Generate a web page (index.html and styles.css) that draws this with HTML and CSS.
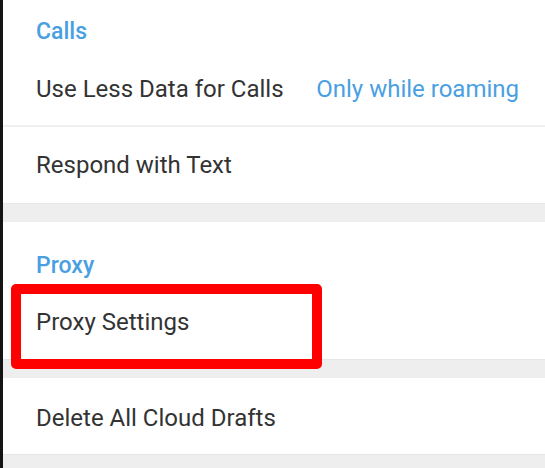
FILE: index.html
```html
<!DOCTYPE html>
<html>
  <head>
    <meta name="viewport" content="width=device-width,initial-scale=1.0">
    <title>Settings</title>
    <link rel="stylesheet" href="styles.css">
  </head>
  <body>
    <div id="settings">
      <div class="section">
        <div class="section-header first">Calls</div>
        <div class="row divided">
          <span class="label">Use Less Data for Calls</span>
          <span class="value">Only while roaming</span>
        </div>
        <div class="row">
          <span class="label">Respond with Text</span>
        </div>
      </div>
      <div class="shadow-gap"></div>
      <div class="section">
        <div class="section-header">Proxy</div>
        <div class="row highlighted">
          <span class="label">Proxy Settings</span>
          <div class="highlight-box"></div>
        </div>
      </div>
      <div class="shadow-gap"></div>
      <div class="section">
        <div class="row lowered">
          <span class="label">Delete All Cloud Drafts</span>
        </div>
      </div>
      <div class="shadow-gap tail"></div>
    </div>
  </body>
</html>
```

FILE: styles.css
```css
body {
  margin: 0;
  background: #fff;
  font-family: Roboto, "Noto Sans", sans-serif;
  height: 468px;
  overflow: hidden;
}
#settings {
  border-left: 3px solid #141414;
  height: 100%;
  display: flex;
  flex-direction: column;
}
.section {
  background: #fff;
}
.section-header {
  height: 62px;
  box-sizing: border-box;
  padding: 30px 0 0 33px;
  font-size: 23px;
  font-weight: 500;
  color: #4a9fe2;
  line-height: 28px;
}
.section-header.first {
  height: 50px;
  padding-top: 18px;
}
.row {
  height: 76px;
  box-sizing: border-box;
  display: flex;
  align-items: center;
  padding: 0 26px 0 33px;
  font-size: 24px;
  color: #333;
}
.row.divided {
  height: 77px;
  border-bottom: 2px solid #f0f0f0;
  padding-top: 3px;
}
.row.lowered {
  padding-top: 3px;
}
.row .label {
  flex: 1;
}
.row .value {
  color: #4a9fe2;
}
.row.highlighted {
  height: 75px;
  position: relative;
}
.highlight-box {
  position: absolute;
  left: 8px;
  top: 0;
  width: 311px;
  height: 85px;
  box-sizing: border-box;
  border: 10px solid #ff0000;
  border-radius: 5px;
  z-index: 2;
}
.shadow-gap {
  height: 18px;
  background: #eeeeee;
  border-top: 1px solid #e6e6e6;
}
.shadow-gap.tail {
  flex: 1;
}
```
